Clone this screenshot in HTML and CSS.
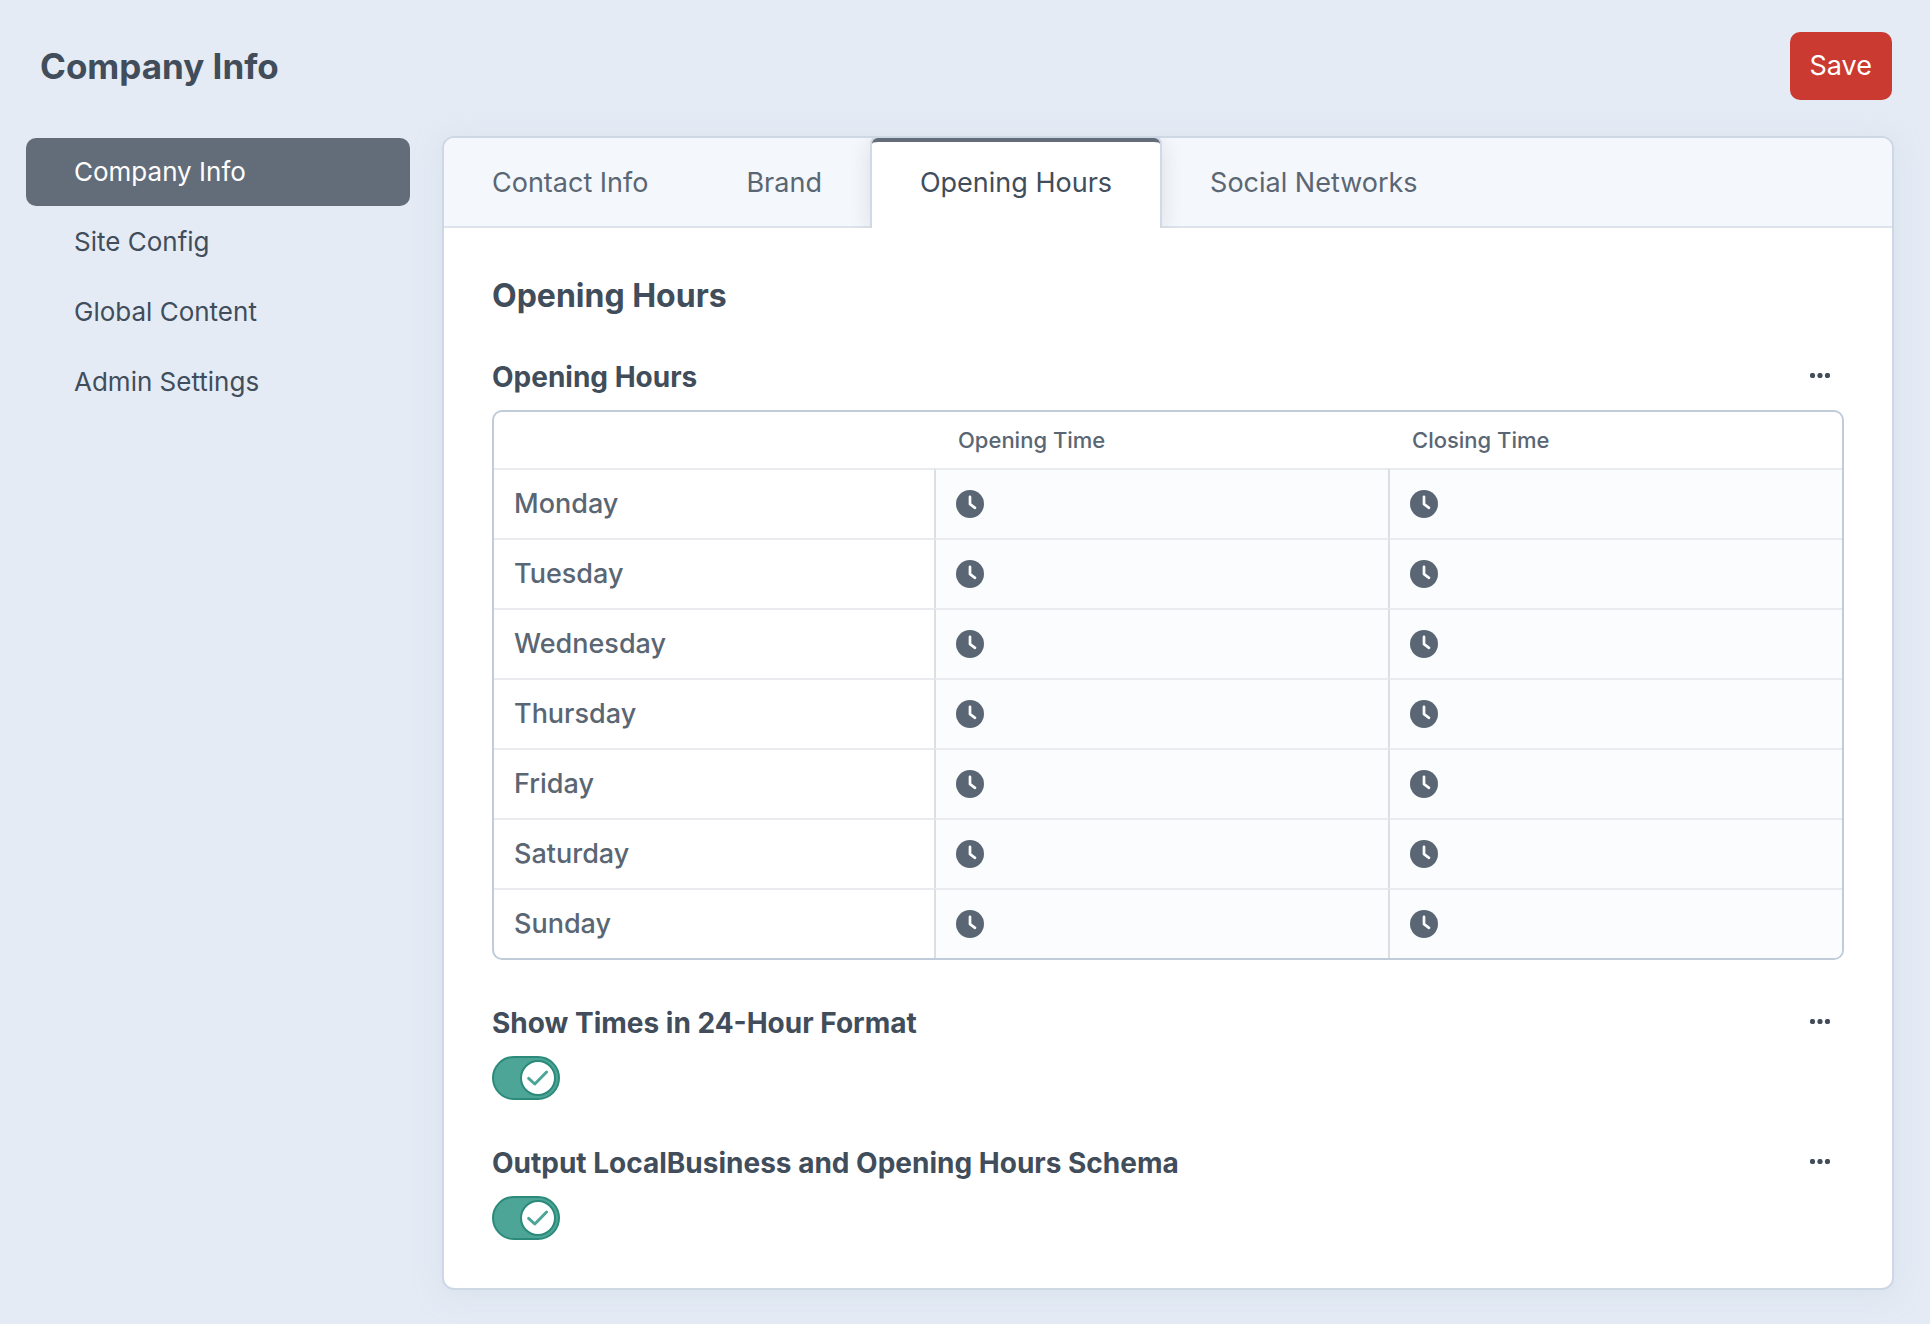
FILE: index.html
```html
<!DOCTYPE html>
<html lang="en">
<head>
<meta charset="utf-8">
<meta name="viewport" content="width=device-width, initial-scale=1">
<title>Company Info</title>
<link rel="stylesheet" href="styles.css">
</head>
<body>
<svg class="sprite" aria-hidden="true">
  <symbol id="clock" viewBox="0 0 28 28">
    <circle cx="14" cy="14" r="14" fill="currentColor"/>
    <path d="M14 6.8V14.2L19 17.8" fill="none" stroke="#fbfcfe" stroke-width="2.7" stroke-linecap="round" stroke-linejoin="round"/>
  </symbol>
  <symbol id="dots" viewBox="0 0 20 8">
    <circle cx="2.5" cy="2.5" r="2.6"/><circle cx="10" cy="2.5" r="2.6"/><circle cx="17.5" cy="2.5" r="2.6"/>
  </symbol>
  <symbol id="knob" viewBox="0 0 68 44">
    <circle cx="46" cy="22" r="17" fill="#fff" stroke="#2b8a79" stroke-width="2"/>
    <path d="M36.6 22.4L42.8 28L54.6 16" fill="none" stroke="#4da598" stroke-width="3" stroke-linecap="round" stroke-linejoin="round"/>
  </symbol>
</svg>

<header class="page-header">
  <h1 class="page-title">Company Info</h1>
  <button class="save" type="submit" form="settings">Save</button>
</header>

<div class="layout">
  <nav class="sidebar" aria-label="Globals">
    <a class="sidebar-link is-active" href="#company" aria-current="page">Company Info</a>
    <a class="sidebar-link" href="#site">Site Config</a>
    <a class="sidebar-link" href="#content">Global Content</a>
    <a class="sidebar-link" href="#admin">Admin Settings</a>
  </nav>

  <main class="card">
    <nav class="tabs" aria-label="Sections">
      <a class="tab" href="#contact">Contact Info</a>
      <a class="tab" href="#brand">Brand</a>
      <a class="tab is-active" href="#hours" aria-current="true">Opening Hours</a>
      <a class="tab" href="#social">Social Networks</a>
    </nav>

    <form class="fields" id="settings">
      <h2 class="section-title">Opening Hours</h2>

      <section class="field">
        <div class="field-head">
          <h3 class="field-label">Opening Hours</h3>
          <button class="more" type="button" aria-label="Opening Hours actions"><svg><use href="#dots"/></svg></button>
        </div>
        <div class="table-frame">
          <table class="hours">
            <colgroup><col class="day-col"><col><col></colgroup>
            <thead>
              <tr><td></td><th scope="col">Opening Time</th><th scope="col">Closing Time</th></tr>
            </thead>
            <tbody>
              <tr><th scope="row">Monday</th>
                <td><label class="time"><svg><use href="#clock"/></svg><input type="text" aria-label="Monday opening time"></label></td>
                <td><label class="time"><svg><use href="#clock"/></svg><input type="text" aria-label="Monday closing time"></label></td></tr>
              <tr><th scope="row">Tuesday</th>
                <td><label class="time"><svg><use href="#clock"/></svg><input type="text" aria-label="Tuesday opening time"></label></td>
                <td><label class="time"><svg><use href="#clock"/></svg><input type="text" aria-label="Tuesday closing time"></label></td></tr>
              <tr><th scope="row">Wednesday</th>
                <td><label class="time"><svg><use href="#clock"/></svg><input type="text" aria-label="Wednesday opening time"></label></td>
                <td><label class="time"><svg><use href="#clock"/></svg><input type="text" aria-label="Wednesday closing time"></label></td></tr>
              <tr><th scope="row">Thursday</th>
                <td><label class="time"><svg><use href="#clock"/></svg><input type="text" aria-label="Thursday opening time"></label></td>
                <td><label class="time"><svg><use href="#clock"/></svg><input type="text" aria-label="Thursday closing time"></label></td></tr>
              <tr><th scope="row">Friday</th>
                <td><label class="time"><svg><use href="#clock"/></svg><input type="text" aria-label="Friday opening time"></label></td>
                <td><label class="time"><svg><use href="#clock"/></svg><input type="text" aria-label="Friday closing time"></label></td></tr>
              <tr><th scope="row">Saturday</th>
                <td><label class="time"><svg><use href="#clock"/></svg><input type="text" aria-label="Saturday opening time"></label></td>
                <td><label class="time"><svg><use href="#clock"/></svg><input type="text" aria-label="Saturday closing time"></label></td></tr>
              <tr><th scope="row">Sunday</th>
                <td><label class="time"><svg><use href="#clock"/></svg><input type="text" aria-label="Sunday opening time"></label></td>
                <td><label class="time"><svg><use href="#clock"/></svg><input type="text" aria-label="Sunday closing time"></label></td></tr>
            </tbody>
          </table>
        </div>
      </section>

      <section class="field">
        <div class="field-head">
          <label class="field-label" for="format24">Show Times in 24-Hour Format</label>
          <button class="more" type="button" aria-label="Time format actions"><svg><use href="#dots"/></svg></button>
        </div>
        <div class="switch"><input type="checkbox" id="format24" checked><svg><use href="#knob"/></svg></div>
      </section>

      <section class="field">
        <div class="field-head">
          <label class="field-label" for="schema">Output LocalBusiness and Opening Hours Schema</label>
          <button class="more" type="button" aria-label="Schema actions"><svg><use href="#dots"/></svg></button>
        </div>
        <div class="switch"><input type="checkbox" id="schema" checked><svg><use href="#knob"/></svg></div>
      </section>
    </form>
  </main>
</div>
</body>
</html>
```
FILE: styles.css
```css
* { box-sizing: border-box; }

body {
  margin: 0;
  min-height: 100vh;
  background: #e4ebf5;
  color: #414d5b;
  font: 27px/34px Inter, "Liberation Sans", sans-serif;
}

h1, h2, h3 { margin: 0; }
a { color: inherit; text-decoration: none; }
button, input { font: inherit; color: inherit; }
.sprite { display: none; }

.page-header {
  display: flex;
  align-items: center;
  justify-content: space-between;
  padding: 32px 38px 36px 40px;
}
.page-title { font-size: 35px; line-height: 44px; font-weight: 700; }
.save {
  height: 68px;
  padding: 0 20px;
  border: 0;
  border-radius: 10px;
  background: #ca3a31;
  color: #fff;
}

.layout {
  display: flex;
  align-items: flex-start;
  gap: 32px;
  padding: 0 36px 34px 26px;
}

.sidebar {
  flex: 0 0 384px;
  display: flex;
  flex-direction: column;
  gap: 2px;
  padding-top: 2px;
}
.sidebar-link {
  padding: 17px 48px;
  border-radius: 10px;
  font-size: 26px;
}
.sidebar-link.is-active { background: #636d79; color: #fff; }

.card {
  flex: 1;
  min-width: 0;
  border: 2px solid #ced8e5;
  border-radius: 12px;
  background: #fff;
  box-shadow: 0 4px 24px rgba(205, 216, 228, 0.5);
}

.tabs {
  display: flex;
  gap: 2px;
  height: 90px;
  overflow: hidden;
  border-radius: 10px 10px 0 0;
  background: #f4f7fc;
  box-shadow: inset 0 -2px #dce3ea;
  color: #5a6673;
}
.tab { padding: 28px 48px; }
.tab.is-active {
  padding-top: 24px;
  border-top: 4px solid #636d79;
  border-radius: 6px 6px 0 0;
  background: #fff;
  box-shadow: 0 0 0 2px #d0d9e5, 0 4px 24px rgba(31, 41, 51, 0.14);
  color: #414d5b;
}

.fields { padding: 48px; }
.section-title { margin-bottom: 44px; font-size: 32px; line-height: 40px; font-weight: 700; }
.field + .field { margin-top: 46px; }
.field-head {
  display: flex;
  justify-content: space-between;
  margin-bottom: 16px;
}
.field-label { font-size: 28px; font-weight: 700; }
.more {
  display: flex;
  align-items: center;
  justify-content: center;
  width: 48px;
  height: 34px;
  padding: 0;
  border: 0;
  background: none;
}
.more svg { width: 20px; height: 8px; fill: #414d5b; }

.table-frame {
  overflow: hidden;
  border: 2px solid #c0ccda;
  border-radius: 10px;
}
.hours {
  width: 100%;
  table-layout: fixed;
  border-collapse: separate;
  border-spacing: 0;
  color: #5a6673;
}
.day-col { width: 440px; }
.hours th, .hours td { padding: 0; text-align: left; font-weight: 500; }
.hours thead th { height: 56px; padding-left: 24px; font-size: 22px; line-height: 28px; }
.hours tbody th { height: 70px; padding-left: 20px; border-top: 2px solid #e9ebee; }
.hours tbody td {
  border-top: 2px solid #e9ebee;
  border-left: 2px solid #dcdfe2;
  background: #fbfcfe;
}
.time { display: flex; align-items: center; gap: 12px; padding: 0 20px; }
.time svg { flex: none; width: 28px; height: 28px; }
.time input { flex: 1; min-width: 0; height: 68px; padding: 0; border: 0; background: none; outline: 0; }

.switch { display: grid; width: 68px; height: 44px; }
.switch input, .switch svg { grid-area: 1 / 1; width: 68px; height: 44px; margin: 0; }
.switch input {
  appearance: none;
  border: 2px solid #2b8a79;
  border-radius: 22px;
  background: #4da598;
}
.switch svg { pointer-events: none; }
```
